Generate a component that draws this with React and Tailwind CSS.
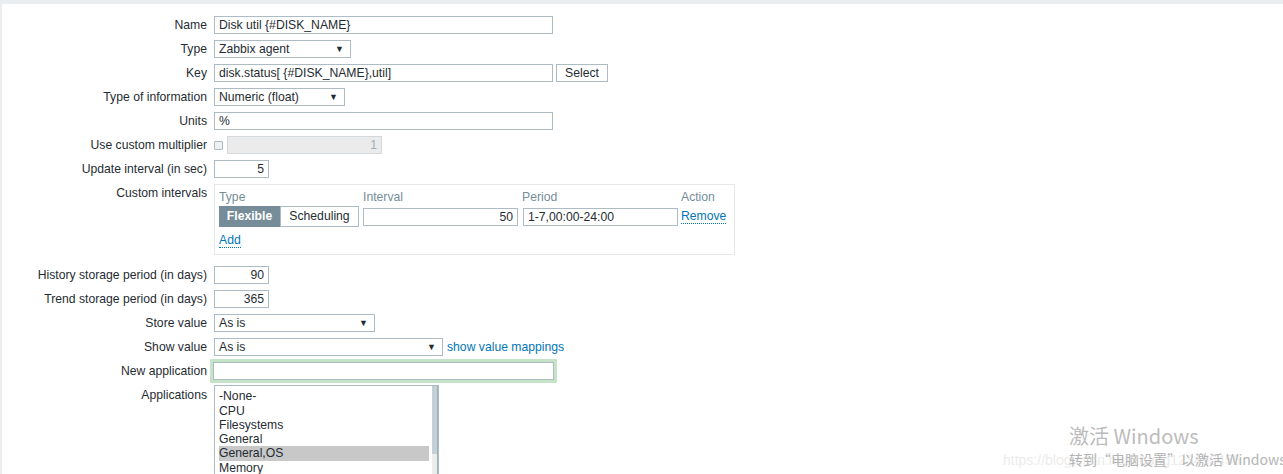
import React from "react";

const font = { fontFamily: '"Liberation Sans", Arial, sans-serif' };

function Label({ children, className = "" }) {
  return (
    <div className={`w-[205px] shrink-0 text-right text-[12.2px] leading-[18px] text-[#1f2c33] ${className}`}>
      {children}
    </div>
  );
}

function TextInput({ value = "", w, right = false, disabled = false }) {
  return (
    <div
      className={`h-[18px] border text-[12.2px] leading-[16px] px-[4px] ${w} ${right ? "text-right" : ""} ${
        disabled ? "bg-[#ebebeb] border-[#d3d9dc] text-[#a3adb3]" : "bg-white border-[#acbbc4] text-[#1f2c33]"
      }`}
    >
      {value}
    </div>
  );
}

function Select({ value, w }) {
  return (
    <div className={`h-[18px] border border-[#acbbc4] bg-white text-[12.2px] leading-[16px] pl-[4px] pr-[6px] flex items-center justify-between text-[#1f2c33] ${w}`}>
      <span>{value}</span>
      <span className="text-[9px] leading-none">▼</span>
    </div>
  );
}

function Row({ label, children, className = "" }) {
  return (
    <div className={`flex items-start gap-[7px] ${className}`}>
      <Label>{label}</Label>
      <div className="flex items-center gap-[3px]">{children}</div>
    </div>
  );
}

const apps = ["-None-", "CPU", "Filesystems", "General", "General,OS", "Memory"];

export default function App() {
  return (
    <div className="relative w-[1283px] h-[474px] overflow-hidden bg-[#ebeef0] pt-[4px] pl-[2px]" style={font}>
      <div className="h-full bg-white pt-[12px] flex flex-col gap-[6px]">
        <Row label="Name">
          <TextInput value="Disk util {#DISK_NAME}" w="w-[339px]" />
        </Row>
        <Row label="Type">
          <Select value="Zabbix agent" w="w-[137px]" />
        </Row>
        <Row label="Key">
          <TextInput value="disk.status[ {#DISK_NAME},util]" w="w-[339px]" />
          <div className="h-[18px] w-[52px] border border-[#acbbc4] bg-white text-[12.2px] leading-[16px] text-center text-[#1f2c33]">
            Select
          </div>
        </Row>
        <Row label="Type of information">
          <Select value="Numeric (float)" w="w-[131px]" />
        </Row>
        <Row label="Units">
          <TextInput value="%" w="w-[339px]" />
        </Row>
        <Row label="Use custom multiplier">
          <div className="w-[9px] h-[9px] border border-[#acbbc4] bg-[#f0f0f0] rounded-[1px] mr-[1px]" />
          <TextInput value="1" w="w-[155px]" right disabled />
        </Row>
        <Row label="Update interval (in sec)">
          <TextInput value="5" w="w-[55px]" right />
        </Row>
        <div className="flex items-start gap-[7px] mb-[5px]">
          <Label>Custom intervals</Label>
          <div className="w-[521px] h-[71px] border border-[#e5e9eb] pl-[4px] pt-[4px] text-[12.2px]">
            <div className="flex gap-[4px] text-[#768d99] leading-[16px]">
              <div className="w-[140px]">Type</div>
              <div className="w-[155px]">Interval</div>
              <div className="w-[155px]">Period</div>
              <div>Action</div>
            </div>
            <div className="flex items-center gap-[4px] mt-[1px]">
              <div className="flex w-[140px] h-[21px]">
                <div className="w-[61px] bg-[#768d99] text-white font-bold leading-[21px] text-center">Flexible</div>
                <div className="w-[79px] border border-[#acbbc4] bg-white text-[#1f2c33] leading-[19px] text-center">
                  Scheduling
                </div>
              </div>
              <TextInput value="50" w="w-[155px]" right />
              <div className="ml-[1px]">
                <TextInput value="1-7,00:00-24:00" w="w-[155px]" />
              </div>
              <span className="-ml-[1px] text-[#0275b8] border-b border-dotted border-[#0275b8] leading-[14px]">Remove</span>
            </div>
            <div className="mt-[4px]">
              <span className="text-[#0275b8] border-b border-dotted border-[#0275b8] leading-[14px]">Add</span>
            </div>
          </div>
        </div>
        <Row label="History storage period (in days)">
          <TextInput value="90" w="w-[55px]" right />
        </Row>
        <Row label="Trend storage period (in days)">
          <TextInput value="365" w="w-[55px]" right />
        </Row>
        <Row label="Store value">
          <Select value="As is" w="w-[161px]" />
        </Row>
        <Row label="Show value">
          <Select value="As is" w="w-[229px]" />
          <span className="text-[12.2px] text-[#0275b8] ml-[1px]">show value mappings</span>
        </Row>
        <div className="flex items-start gap-[7px] -mt-[3px]">
          <Label className="pt-[3px]">New application</Label>
          <div className="-ml-[4px] border-[3px] border-[#c5e3c7] rounded-[1px] p-0">
            <div className="w-[341px] h-[18px] border border-[#acbbc4] bg-white" />
          </div>
        </div>
        <div className="flex items-start gap-[7px] -mt-[4px]">
          <Label className="pt-[1px]">Applications</Label>
          <div className="relative w-[225px] h-[100px] border border-[#acbbc4] bg-white pt-[3px] px-[4px]">
            {apps.map((a) => (
              <div
                key={a}
                className={`w-[210px] h-[14.3px] text-[12.2px] leading-[14.3px] text-[#1f2c33] ${a === "General,OS" ? "bg-[#c8c8c8]" : ""}`}
              >
                {a}
              </div>
            ))}
            <div className="absolute top-0 right-0 w-[6px] h-full bg-[#ececec] border-r border-[#9fb0bd]">
              <div className="w-full h-[68px] bg-[#c5cfd6]" />
            </div>
          </div>
        </div>
      </div>

      <div className="absolute left-[1003px] top-[450px] text-[14px] text-[#ececec]">https://blog.csdn.net/zhang123456456</div>
      <div
        className="absolute left-[1069px] top-[424px] text-[20px] leading-[24px] text-[#bcbcbc]"
        style={{ fontFamily: '"Noto Sans CJK SC", "Liberation Sans", sans-serif' }}
      >
        激活 Windows
      </div>
      <div
        className="absolute left-[1069px] top-[450px] text-[14px] leading-[18px] whitespace-nowrap text-[#b4b4b4]"
        style={{ fontFamily: '"Noto Sans CJK SC", "Liberation Sans", sans-serif' }}
      >
        转到“电脑设置”以激活 Windows。
      </div>
    </div>
  );
}
